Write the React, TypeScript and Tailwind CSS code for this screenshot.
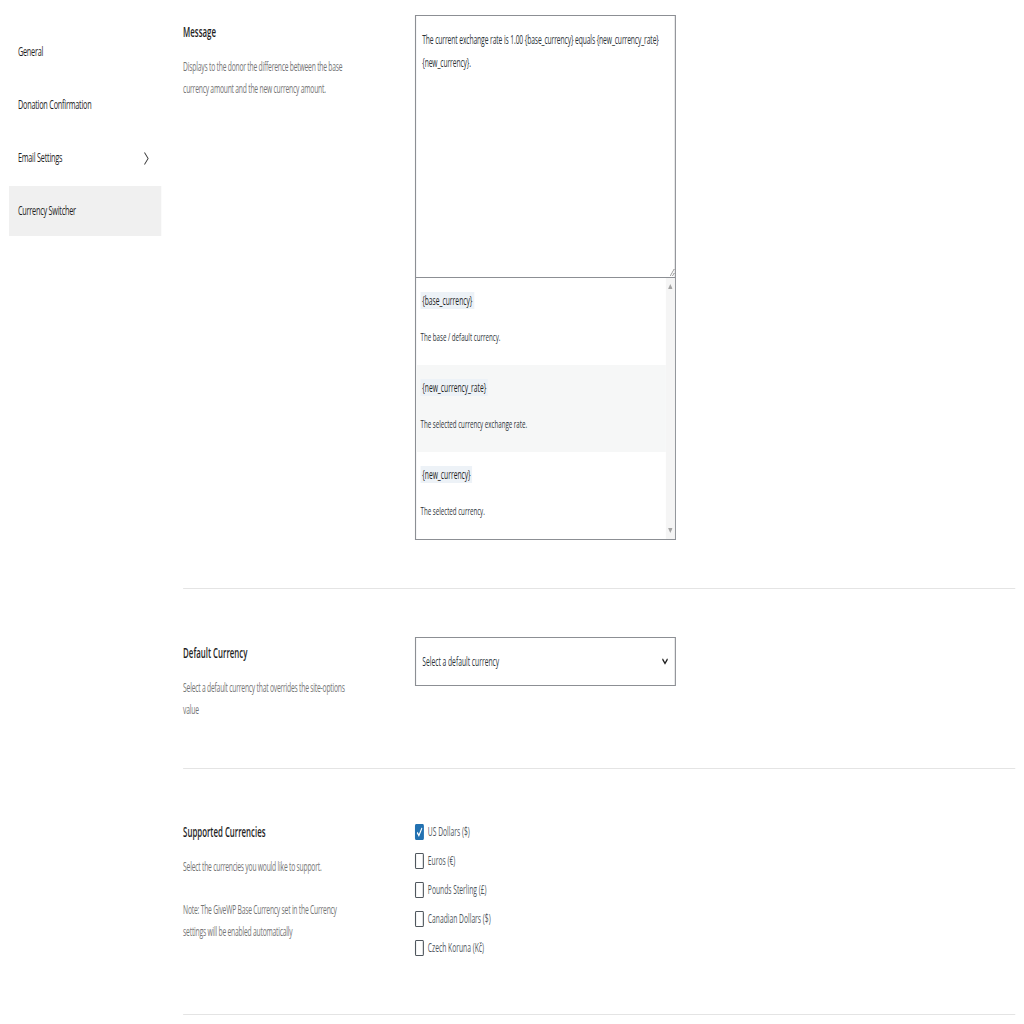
import type { ReactNode } from 'react';

// Скриншот сжат по горизонтали: верстаем в широкой колонке и сжимаем одним scale-x.

const menu = [
  { label: 'General', active: false, arrow: false },
  { label: 'Donation Confirmation', active: false, arrow: false },
  { label: 'Email Settings', active: false, arrow: true },
  { label: 'Currency Switcher', active: true, arrow: false },
];

const tags = [
  { tag: '{base_currency}', text: 'The base / default currency.' },
  { tag: '{new_currency_rate}', text: 'The selected currency exchange rate.' },
  { tag: '{new_currency}', text: 'The selected currency.' },
];

const currencies = [
  { label: 'US Dollars ($)', checked: true },
  { label: 'Euros (€)', checked: false },
  { label: 'Pounds Sterling (£)', checked: false },
  { label: 'Canadian Dollars ($)', checked: false },
  { label: 'Czech Koruna (Kč)', checked: false },
];

function Sidebar() {
  return (
    <aside className="flex w-[327px] shrink-0 flex-col gap-[3px] pl-[16px] pt-[27px]">
      {menu.map((m) => (
        <div
          key={m.label}
          className={`flex h-[50px] w-[272px] items-center justify-between pl-[16px] pr-[22px] text-[13px] tracking-[-0.03em] text-[#1e1e1e] ${
            m.active ? 'bg-[#f0f0f0]' : ''
          }`}
        >
          <span>{m.label}</span>
          {m.arrow && (
            <svg width="9" height="13" viewBox="0 0 9 13" fill="none" stroke="#3c3c3c" strokeWidth="1.3">
              <polyline points="1,0.5 7.5,6.5 1,12.5" />
            </svg>
          )}
        </div>
      ))}
    </aside>
  );
}

function Label({ title, children }: { title: string; children: ReactNode }) {
  return (
    <div className="w-[300px]">
      <h3 className="text-[14px] leading-[20px] font-semibold text-[#1e1e1e]">{title}</h3>
      <div className="mt-[14px] text-[12px] leading-[22px] tracking-[-0.03em] text-[#757575]">{children}</div>
    </div>
  );
}

function Checkbox({ checked }: { checked: boolean }) {
  if (checked) {
    return (
      <span className="flex h-[16px] w-[16px] items-center justify-center rounded-[2px] bg-[#2271b1]">
        <svg width="14" height="14" viewBox="0 0 14 14" fill="none" stroke="#fff" strokeWidth="1.8">
          <polyline points="3,7.5 6,10.5 11.5,3" />
        </svg>
      </span>
    );
  }
  return <span className="h-[16px] w-[16px] rounded-[2px] border-x-2 border-y border-[#50575e] bg-white" />;
}

export default function App() {
  return (
    <div className="min-h-screen w-full overflow-hidden bg-white">
      <div className="flex w-[1829px] origin-top-left scale-x-[0.56] font-['Open_Sans',sans-serif]">
        <Sidebar />
        <main className="flex-1 pr-[16px]">
          {/* Message */}
          <section className="grid grid-cols-[414px_466px] border-b border-[#e4e4e4] pt-[15px] pb-[48px]">
            <div className="pt-[7px]">
              <Label title="Message">
                <p>Displays to the donor the difference between the base currency amount and the new currency amount.</p>
              </Label>
            </div>
            <div>
              <textarea
                readOnly
                defaultValue="The current exchange rate is 1.00 {base_currency} equals {new_currency_rate} {new_currency}."
                className="block h-[263px] w-full border-x-2 border-y border-[#8c8f94] px-[11px] pt-[12px] text-[12px] leading-[23px] tracking-[-0.015em] text-[#2c3338] outline-none"
              />
              <div className="flex h-[262px] border-x-2 border-b border-[#8c8f94]">
                <ul className="flex-1">
                  {tags.map((t, i) => (
                    <li key={t.tag} className={`h-[87px] px-[8px] pt-[11px] ${i === 1 ? 'bg-[#f6f7f7]' : ''}`}>
                      <div className="h-[20px] leading-[20px]">
                        <code className="bg-[#edf2f7] px-[3px] font-['Open_Sans',sans-serif] text-[12px] text-[#1e1e1e]">
                          {t.tag}
                        </code>
                      </div>
                      <p className="mt-[17px] text-[11px] leading-[22px] text-[#2c3338]">{t.text}</p>
                    </li>
                  ))}
                </ul>
                <div className="flex w-[16px] flex-col items-center justify-between bg-[#f5f5f5] py-[6px]">
                  <svg width="8" height="5" viewBox="0 0 8 5" fill="#a3a3a3">
                    <polygon points="4,0 8,5 0,5" />
                  </svg>
                  <svg width="8" height="5" viewBox="0 0 8 5" fill="#a3a3a3">
                    <polygon points="0,0 8,0 4,5" />
                  </svg>
                </div>
              </div>
            </div>
          </section>

          {/* Default Currency */}
          <section className="grid grid-cols-[414px_466px] border-b border-[#e4e4e4] pt-[48px] pb-[47px]">
            <div className="pt-[6px]">
              <Label title="Default Currency">
                <p>Select a default currency that overrides the site-options value</p>
              </Label>
            </div>
            <div className="relative h-[49px]">
              <select className="h-full w-full appearance-none border-x-2 border-y border-[#8c8f94] bg-white px-[11px] text-[12px] text-[#2c3338] outline-none">
                <option>Select a default currency</option>
              </select>
              <svg
                className="pointer-events-none absolute top-[21px] right-[14px]"
                width="11"
                height="7"
                viewBox="0 0 11 7"
                fill="none"
                stroke="#1e1e1e"
                strokeWidth="1.8"
              >
                <polyline points="1,1 5.5,5.5 10,1" />
              </svg>
            </div>
          </section>

          {/* Supported Currencies */}
          <section className="grid grid-cols-[414px_466px] border-b border-[#e4e4e4] pt-[48px] pb-[52px]">
            <div className="pt-[5px]">
              <Label title="Supported Currencies">
                <p>Select the currencies you would like to support.</p>
                <p className="mt-[21px]">Note: The GiveWP Base Currency set in the Currency settings will be enabled automatically</p>
              </Label>
            </div>
            <ul>
              {currencies.map((c) => (
                <li key={c.label} className="flex h-[29px] items-center gap-[7px] text-[12px] text-[#50575e]">
                  <Checkbox checked={c.checked} />
                  <span>{c.label}</span>
                </li>
              ))}
            </ul>
          </section>
        </main>
      </div>
    </div>
  );
}
